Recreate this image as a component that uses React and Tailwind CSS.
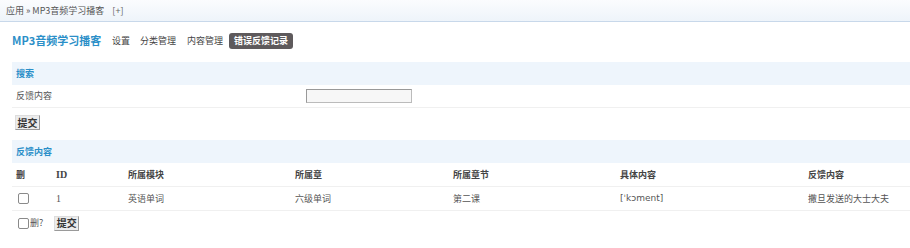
import React from "react";

function Cb() {
  return <span className="inline-block w-[11px] h-[11px] border border-[#8a8a8a] rounded-[2px] bg-white" />;
}

function Btn() {
  return (
    <span className="inline-flex items-center justify-center w-[25px] h-[15px] bg-[#ececec] border border-[#9a9a9a] border-t-[#ddd] border-l-[#ddd] text-[10px] font-bold text-[#333] leading-none">提交</span>
  );
}

export default function App() {
  const cols = "grid grid-cols-[40px_72px_167px_158px_167px_188px_1fr]";
  return (
    <div className="w-[910px] h-[248px] bg-white text-[9px] text-[#555] overflow-hidden" style={{ fontFamily: '"Noto Sans CJK SC", sans-serif' }}>
      <div className="h-[22px] flex items-center pl-[6px] bg-gradient-to-b from-[#fbfcfe] to-[#eef4fa] border-b border-[#c8d8ea] text-[9px] text-[#555]">
        应用 » MP3音频学习播客 <span className="ml-[8px] text-[#666]">[+]</span>
      </div>
      <div className="h-[36px] flex items-center pl-[12px] pt-[1px]">
        <span className="text-[11px] font-bold text-[#2b8fc8] w-[100px]">MP3音频学习播客</span>
        <span className="text-[9px] text-[#444]">设置</span>
        <span className="ml-[10px] text-[9px] text-[#444]">分类管理</span>
        <span className="ml-[11px] text-[9px] text-[#444]">内容管理</span>
        <span className="ml-[6px] px-[5px] h-[16px] flex items-center rounded-[3px] bg-[#5e5a5c] text-[9px] font-bold text-white">错误反馈记录</span>
      </div>
      <div className="ml-[12px] mt-[4px]">
        <div className="h-[23px] flex items-center pl-[4px] bg-[#eef5fc] text-[#2b8fc8] font-bold text-[9px]">搜索</div>
        <div className="h-[23px] flex items-center border-b border-[#f0f0f0]">
          <span className="w-[294px] pl-[4px] text-[9px] text-[#555]">反馈内容</span>
          <span className="w-[106px] h-[14px] bg-[#f7f7f7] border border-[#bbb] border-t-[#999] border-l-[#999]" />
        </div>
        <div className="h-[29px] flex items-center pl-[3px]"><Btn /></div>
        <div className="mt-[3px] h-[23px] flex items-center pl-[4px] bg-[#eef5fc] text-[#2b8fc8] font-bold text-[9px]">反馈内容</div>
        <div className={`${cols} h-[24px] items-center border-b border-[#f0f0f0] font-bold text-[#444] text-[9px]`}>
          <span className="pl-[4px]">删</span>
          <span className="pl-[4px] text-[10px]" style={{ fontFamily: '"Liberation Serif", serif' }}>ID</span>
          <span className="pl-[4px]">所属模块</span>
          <span className="pl-[4px]">所属章</span>
          <span className="pl-[4px]">所属章节</span>
          <span className="pl-[4px]">具体内容</span>
          <span className="pl-[4px]">反馈内容</span>
        </div>
        <div className={`${cols} h-[24px] items-center border-b border-[#f0f0f0] text-[9px] text-[#555]`}>
          <span className="pl-[6px] flex"><Cb /></span>
          <span className="pl-[4px] text-[10px]" style={{ fontFamily: '"Liberation Serif", serif' }}>1</span>
          <span className="pl-[4px]">英语单词</span>
          <span className="pl-[4px]">六级单词</span>
          <span className="pl-[4px]">第二课</span>
          <span className="pl-[4px]" style={{ fontFamily: '"DejaVu Sans", sans-serif' }}>[ˈkɔment]</span>
          <span className="pl-[4px]">撒旦发送的大士大夫</span>
        </div>
        <div className="h-[24px] flex items-center pl-[6px] text-[9px] text-[#555]">
          <Cb /><span className="ml-[1px]">删?</span>
          <span className="ml-[11px]"><Btn /></span>
        </div>
      </div>
    </div>
  );
}
